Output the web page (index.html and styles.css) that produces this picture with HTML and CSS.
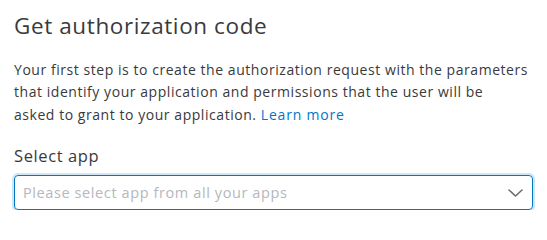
FILE: index.html
```html
<!DOCTYPE html>
<html>
<head>
<meta charset="utf-8">
<link rel="stylesheet" href="styles.css">
</head>
<body>
<div class="panel">
  <h1 class="title">Get authorization code</h1>
  <p class="desc">Your first step is to create the authorization request with the parameters that identify your application and permissions that the user will be asked to grant to your application. <a class="link" href="#">Learn more</a></p>
  <label class="label">Select app</label>
  <div class="select">
    <span class="placeholder">Please select app from all your apps</span>
    <svg class="chev" width="15" height="8" viewBox="0 0 15 8"><path d="M1 1 L7.5 7 L14 1" fill="none" stroke="#6b6c72" stroke-width="1.6" stroke-linecap="round" stroke-linejoin="round"/></svg>
  </div>
</div>
</body>
</html>
```
FILE: styles.css
```css
html, body { margin: 0; padding: 0; background: #fff; }
body { font-family: "Open Sans", "Noto Sans", sans-serif; color: #393a3d; }
.panel { padding: 12px 14px 0 14px; width: 519px; }
.title { margin: 0; font-size: 22.5px; font-weight: 400; line-height: 28px; letter-spacing: 0.6px; color: #393a3d; }
.desc { margin: 18.5px 5px 0 0; font-size: 14px; line-height: 22.5px; letter-spacing: 0.55px; color: #393a3d; }
.link { color: #0077c5; text-decoration: none; letter-spacing: 0.8px; }
.label { display: block; margin-top: 18px; font-size: 16.5px; line-height: 24px; letter-spacing: 0.6px; }
.select { box-sizing: border-box; margin-top: 7px; height: 35px; border: 1px solid #0077c5; border-radius: 4px; box-shadow: 0 0 0 2px #cfe6f7; display: flex; align-items: center; justify-content: space-between; padding: 0 9px 0 8px; }
.placeholder { font-size: 14.5px; letter-spacing: 0.6px; color: #b5b7bd; }
.chev { display: block; }
```
